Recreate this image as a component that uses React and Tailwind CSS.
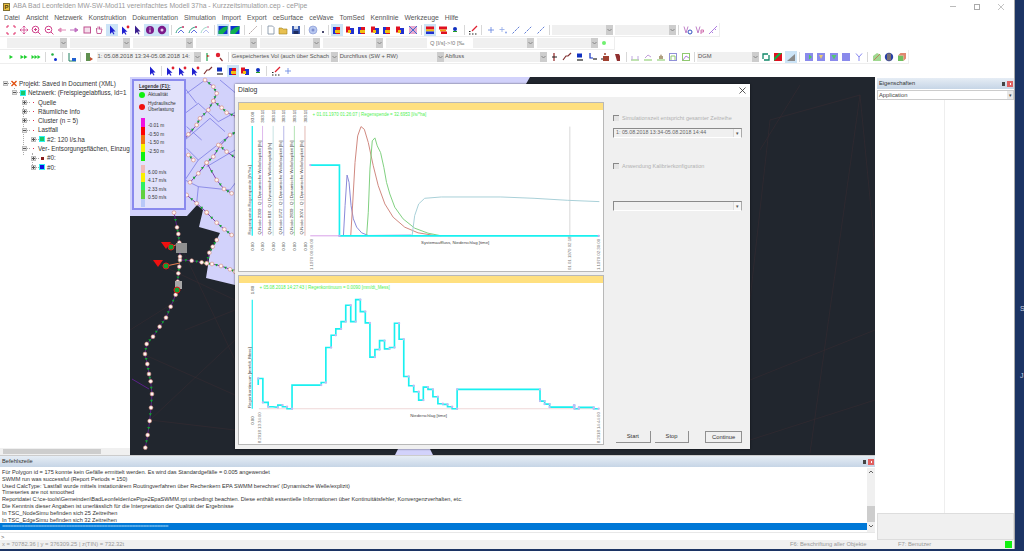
const ICONS = {
  corners: <path d="M1 3V1h2M7 1h2v2M9 7v2H7M3 9H1V7" stroke="#e0306a" fill="none" />,
  pan: <path d="M5 1v8M1 5h8M3.6 2.4 5 1l1.4 1.4M3.6 7.6 5 9l1.4-1.4M2.4 3.6 1 5l1.4 1.4M7.6 3.6 9 5 7.6 6.4" stroke="#d0408a" fill="none" strokeWidth=".8" />,
  zoomin: <g stroke="#d0408a" fill="none"><circle cx="4.5" cy="4.5" r="3.3" /><path d="M3 4.5h3M4.5 3v3M7 7l2.4 2.4" /></g>,
  zoomout: <g stroke="#d0408a" fill="none"><circle cx="4.5" cy="4.5" r="3.3" /><path d="M3 4.5h3M7 7l2.4 2.4" /></g>,
  left: <path d="M9 5H4V3L1 5l3 2V5" fill="#e08ab8" stroke="#e08ab8" />,
  right: <path d="M1 5h5V3l3 2-3 2V5" fill="#c070c0" stroke="#c070c0" />,
  square: <rect x="2" y="2" width="6.5" height="6" fill="#f4e0ec" stroke="#c05090" />,
  hand: <path d="M2.5 5V3M4 4.5v-3M5.5 4.5v-3M7 5V2.5M2.5 5 3 8.5h4L8 4" stroke="#c05090" fill="none" strokeWidth=".9" />,
  arrow: <path d="M3 .5V9l2-2 1.5 2.5 1-.6L6 6.5h2.5z" fill="#1f1fd0" />,
  arrowdark: <path d="M3 .5V9l2-2 1.5 2.5 1-.6L6 6.5h2.5z" fill="#3a1f90" />,
  arrowred: <g><path d="M2 1.5v8l2-2 1.5 2.3 1-.6L5 6.8h2.5z" fill="#1f1fd0" /><circle cx="8" cy="2" r="1.4" fill="#e02030" /></g>,
  info: <g><circle cx="5" cy="5" r="4" fill="#7a1a8a" /><path d="M5 2.5v1M5 4.5v3" stroke="#fff" /></g>,
  gear: <g><circle cx="5" cy="5" r="4.2" fill="#7a1a8a" /><circle cx="5" cy="5" r="1.5" fill="#e8c8f0" /></g>,
  swoop: <g fill="none"><path d="M1 8C2 4 5 2 9 2" stroke="#30a080" /><path d="M3 8 6 5 9 8" stroke="#6070e0" /><circle cx="8" cy="2" r="1" fill="#e0407a" /></g>,
  swoopfade: <g fill="none"><path d="M1 8C2 4 5 2 9 2" stroke="#a0d8c8" /><path d="M3 8 6 5 9 8" stroke="#b8c0f0" /><circle cx="8" cy="2" r="1" fill="#f0a0c0" /></g>,
  terrain: <g><rect x=".5" y="1" width="9" height="8" fill="#1030d0" /><path d="M.5 9V6L5 2.5 9.5 1v3L5 9z" fill="#10b050" /></g>,
  line: <path d="M1 9l8-8" stroke="#b0a0a0" strokeDasharray="2 1" />,
  page: <path d="M2 1h4.5L8 2.5V9H2z" fill="#fff" stroke="#7a8aa0" strokeWidth=".8" />,
  folder: <path d="M1 3h3l1 1h4v5H1z" fill="#e8c050" stroke="#a08020" strokeWidth=".6" />,
  save: <g><rect x="1" y="1" width="8" height="8" fill="#4060b0" /><rect x="3" y="1" width="4" height="3" fill="#d8e0f0" /><rect x="2.5" y="6" width="5" height="3" fill="#1c2c60" /></g>,
  globe: <g><circle cx="5" cy="5" r="4" fill="#b8c8f0" stroke="#8090d0" strokeWidth=".6" /><circle cx="5" cy="5" r="1.5" fill="#8090d0" /></g>,
  rb: <g><rect x="1" y="2" width="4" height="7" fill="#2030d0" /><rect x="4" y="2" width="4" height="7" fill="#e01020" /><rect x="3" y="5" width="5" height="3" fill="#f0c010" /></g>,
  rb2: <g><rect x="1" y="1.5" width="4" height="6" fill="#e01020" /><rect x="5" y="3" width="4" height="6" fill="#2030d0" /><rect x="3" y="5" width="3" height="3" fill="#f0c010" /></g>,
  mix: <g><rect x="1" y="1" width="8" height="8" fill="#e8a8d0" /><path d="M1 1l8 8M9 1 1 9" stroke="#4070d0" /></g>,
  stack: <g><rect x="1" y="1.5" width="8" height="3" fill="#e01020" /><rect x="1" y="4.5" width="8" height="2" fill="#f0c010" /><rect x="1" y="6.5" width="8" height="2.5" fill="#2030d0" /></g>,
  stack2: <g><rect x="1" y="1.5" width="8" height="3" fill="#e01020" /><rect x="2" y="4.5" width="6" height="2" fill="#f0a010" /><rect x="3" y="6.5" width="6" height="2.5" fill="#e01020" /></g>,
  node: <g><circle cx="5" cy="4" r="2" fill="#1030c0" /><path d="M3 6.5h4" stroke="#20a020" /></g>,
  tools: <g><path d="M4 6l5-5" stroke="#e02030" strokeWidth="1.2" /><path d="M1 9h1.5M4 9h1.5M7 9h1.5M1 6.5h1.5" stroke="#202020" strokeWidth="1.2" /></g>,
  plus: <path d="M5 2v6M2 5h6" stroke="#6080e0" strokeWidth=".8" />,
  plusdot: <g><path d="M4 2v5M1.5 4.5h5" stroke="#90a8e8" strokeWidth=".8" /><circle cx="8" cy="7.5" r="1" fill="#90a8e8" /></g>,
  seg: <path d="M1.5 8.5l7-7" stroke="#5070d0" strokeWidth=".9" strokeDasharray="2.5 1" />,
  vb: <g fill="none"><path d="M1 1.5 3 8l2-6.5" stroke="#c080c8" /><circle cx="7" cy="7" r="2" stroke="#3050c0" /></g>,
  vp: <g fill="none"><path d="M1 1.5 3 8l2-6.5" stroke="#c080c8" /><path d="M6 9V5h2.5v2H6" stroke="#d070b0" /></g>,
  vs: <path d="M1 9l8-8M3 6l2 2M6 3l2 2" stroke="#b080e0" fill="none" />,
  play: <path d="M3.5 3v4L7 5z" fill="#20d030" />,
  play2: <path d="M1.5 3v4L5 5zM5 3v4l3.5-2z" fill="#20d030" />,
  play3: <path d="M.5 3v4L3.5 5zM3.5 3v4L6.5 5zM6.5 3v4L9.5 5z" fill="#20d030" />,
  netdot: <g><circle cx="3.5" cy="2.5" r="1.3" fill="#20b040" /><circle cx="6.5" cy="7.5" r="1.5" fill="#1030d0" /></g>,
  kn: <g><path d="M2 1v8h7" stroke="#208060" fill="none" /><rect x="5" y="6" width="4" height="3" fill="#2060d0" /></g>,
  plant: <g><rect x="2" y="1" width="4" height="8" fill="#609050" /><path d="M6 5l3 2-3 2z" fill="#c05030" /></g>,
  tee: <g><path d="M5 1v8" stroke="#20a050" strokeWidth="1.2" /><path d="M5 3l3 1-3 1" fill="#c03020" /></g>,
  tee2: <g><circle cx="4" cy="3" r="2.2" fill="#e02030" /><path d="M6 6l2.5 3" stroke="#903030" strokeWidth="1.2" /></g>,
  pipeA: <g><path d="M4 1v8" stroke="#902020" strokeWidth="1.2" /><path d="M2 5h5" stroke="#202020" /></g>,
  pipeB: <path d="M1 8l3-4h2l3-3" stroke="#803030" fill="none" strokeWidth="1.2" />,
  pipeC: <g><rect x="2" y="1.5" width="5" height="4" fill="#1030c0" /><path d="M2 8h6" stroke="#202020" strokeWidth="1.2" /></g>,
  pipeD: <g><path d="M2 1v5h3" stroke="#1030c0" strokeWidth="1.2" fill="none" /><path d="M5 7h4" stroke="#202020" strokeWidth="1.2" /></g>,
  pipeE: <g><rect x="3" y="4" width="6" height="5" fill="#a04030" /><path d="M1 7h2" stroke="#202020" /><circle cx="5" cy="2" r="1" fill="#a04030" /></g>,
  pipeF: <path d="M2 2h4l1 2v5H4z" fill="#903030" />,
  chart: <g fill="none"><path d="M1 8h8" stroke="#80c860" /><path d="M2 8V4M8 8V4" stroke="#c0a8e0" /></g>,
  chart2: <g fill="none"><path d="M1 8h8" stroke="#80c860" /><path d="M2 6l3-3 3 2" stroke="#c0a0d8" /></g>,
  chart3: <g><path d="M1 8h8" stroke="#80c860" /><path d="M3 7V4h4v3zM4 4l1-2 1 2" fill="#b0a080" /></g>,
  chart4: <g fill="none"><rect x="1.5" y="1.5" width="7" height="7" stroke="#9090d8" /><path d="M3 8V4h4v4" stroke="#90c870" /></g>,
  chart5: <g fill="none"><rect x="1.5" y="1.5" width="7" height="7" stroke="#90c870" /><path d="M2 8l3-4 3 2" stroke="#b080d8" /></g>,
  cycle: <g fill="none" stroke="#108868" strokeWidth="1.3"><path d="M2 7V2h5" /><path d="M8 3v5H3" /></g>,
  rg: <g><rect x="1" y="1" width="8" height="8" fill="#e01020" /><path d="M1 9V6L6 1h3z" fill="#10b040" /></g>,
  wedge: <path d="M1 9 9 2v7z" fill="#8a8a8a" />,
  blueA: <g><rect x="1" y="1" width="8" height="8" fill="#8a8aec" /><path d="M5 2.5 8 5 5 7.5z" fill="#50c860" /></g>,
  blueB: <g><rect x="1" y="1" width="8" height="8" fill="#8a8aec" /><path d="M3 3h4L5 7z" fill="#e8c870" /></g>,
  blueC: <g><rect x="1" y="1" width="8" height="8" fill="#8a8aec" /><path d="M2.5 3h5L5 7.5z" fill="#50c870" /></g>,
  blueD: <rect x="1" y="1" width="8" height="8" fill="#8a8aec" />,
  why: <path d="M2 1.5 5 5l3-3.5M5 5v4" stroke="#8888f0" fill="none" />,
  greenmap: <g><path d="M1 9V4l4-3 4 2v6z" fill="#a0d890" /><path d="M2 8l6-6" stroke="#c08060" /></g>,
  earth: <g><circle cx="5" cy="5" r="4.2" fill="#2840a8" /><path d="M4 1.5v7M6 1.5v7" stroke="#c8a040" /></g>,
  cube: <g><rect x="1" y="3.5" width="5.5" height="5.5" fill="#70c060" /><path d="M1 3.5 3.5 1H9v5.5L6.5 9V3.5z" fill="#e08870" /></g>,
}

function Ic({ k, on }) {
  return (
    <span className={`w-[12.6px] h-[12px] flex shrink-0 items-center justify-center ${on ? 'bg-[#cce4f7]' : ''}`}>
      <svg className="w-[10px] h-[10px]" viewBox="0 0 10 10">{ICONS[k]}</svg>
    </span>
  )
}

function Sep() {
  return <span className="w-px h-[10px] mx-[2px] shrink-0 bg-[#d8d8d8]" />
}

function Combo({ w, text }) {
  return (
    <div className={`${w} h-[10px] shrink-0 flex items-center justify-between bg-[#f0f0f0] text-[5.8px] text-[#555] overflow-hidden`}>
      <span className="pl-[1px] whitespace-nowrap">{text}</span>
      <span className="w-[7px] h-full shrink-0 flex items-center justify-center bg-[#cdcdcd]">
        <svg className="w-[5px] h-[4px]" viewBox="0 0 5 4"><path d="M.5 1 2.5 3 4.5 1" stroke="#888" fill="none" /></svg>
      </span>
    </div>
  )
}

const MENU = ['Datei', 'Ansicht', 'Netzwerk', 'Konstruktion', 'Dokumentation', 'Simulation', 'Import', 'Export', 'ceSurface', 'ceWave', 'TomSed', 'Kennlinie', 'Werkzeuge', 'Hilfe']

function Toolbars() {
  return (
    <div className="h-[54px] shrink-0 flex flex-col bg-white">
      <div className="h-[14px] flex items-center pl-[5px] border-b border-r border-[#eee] w-[720px]">
        {['corners', 'pan', 'zoomin', 'zoomout', 'left', 'right', 'square', 'hand'].map((k, i) => <Ic key={i} k={k} />)}
        <Ic k="arrow" on /><Ic k="arrowred" /><Ic k="arrowdark" /><Ic k="info" on /><Ic k="gear" on />
        <Sep />
        <Ic k="swoop" /><Ic k="swoop" /><Ic k="swoopfade" />
        <Sep />
        <Ic k="terrain" on /><Ic k="terrain" />
        <Sep />
        <Ic k="line" />
        <Sep />
        <Ic k="page" /><Ic k="folder" /><Ic k="save" />
        <Sep />
        <Ic k="globe" /><span className="w-[8px] h-[10px] flex items-end justify-center"><span className="w-[2px] h-[2px] mb-[2px] rounded-full bg-[#101040]" /></span>
        <Sep />
        <Ic k="rb" on /><Ic k="rb2" /><Ic k="rb" /><Ic k="rb2" /><Ic k="rb" /><Ic k="rb2" /><Ic k="mix" />
        <Sep />
        <Ic k="stack" on /><Ic k="stack2" /><Ic k="node" />
        <Sep />
        <Ic k="tools" />
        <Sep />
        <Ic k="plus" /><Ic k="plusdot" /><Ic k="seg" /><Ic k="seg" /><Ic k="seg" />
        <Sep />
        <div className="flex gap-[2px]"><Combo w="w-[61px]" /><Combo w="w-[61px]" /></div>
        <Sep />
        <Ic k="vb" /><Ic k="vp" /><Ic k="vs" />
      </div>
      <div className="h-[13px] flex items-center pl-[7px] gap-[3px] w-[615px] border-b border-r border-[#eee]">
        <Combo w="w-[60px]" /><Combo w="w-[60px]" /><Combo w="w-[60px]" /><Combo w="w-[61px]" /><Combo w="w-[60px]" /><Combo w="w-[60px]" />
        <div className="w-[41px] h-[10px] bg-[#f0f0f0]" />
        <span className="w-[40px] text-[5.8px] text-[#777] whitespace-nowrap">Q [l/s]-&gt;!0 [‰</span>
        <Combo w="w-[61px]" />
        <Combo w="w-[61px]" />
        <span className="w-[4px] h-[4px] ml-[1px] rounded-full bg-[#70f070]" />
      </div>
      <div className="h-[14px] flex items-center pl-[5px] w-[909px] border-b border-r border-[#eee]">
        <Ic k="play" /><Ic k="play2" /><Ic k="play3" />
        <Sep />
        <Ic k="netdot" />
        <Sep />
        <Ic k="kn" />
        <Sep />
        <Ic k="plant" />
        <div className="w-[104px] ml-[1px]"><Combo w="w-[104px]" text="1: 05.08.2018 13:34-05.08.2018 14:" /></div>
        <Ic k="tee" /><Ic k="tee2" />
        <Sep />
        <Combo w="w-[107px]" text="Gespeichertes Vol (auch über Schach" />
        <div className="w-[2px]" />
        <Combo w="w-[105px]" text="Durchfluss (SW + RW)" />
        <div className="w-[1px]" />
        <Combo w="w-[103px]" text="Abfluss" />
        <div className="w-[3px]" />
        <Ic k="pipeA" /><Ic k="pipeB" /><Ic k="pipeC" /><Ic k="pipeD" /><Ic k="pipeE" /><Ic k="pipeF" />
        <Sep />
        <Ic k="chart" /><Ic k="chart2" /><Ic k="chart3" /><Ic k="chart4" /><Ic k="chart5" />
        <Sep />
        <Combo w="w-[62px]" text="DGM" />
        <div className="w-[1px]" />
        <Ic k="cycle" /><Ic k="rg" /><Ic k="wedge" on />
        <Sep />
        <Ic k="blueA" /><Ic k="blueB" /><Ic k="blueC" /><Ic k="blueD" /><Ic k="why" />
        <Sep />
        <Ic k="greenmap" /><Ic k="earth" /><Ic k="cube" />
      </div>
      <div className="h-[13px] flex items-center pl-[146px]">
        <Ic k="arrow" />
        <Sep />
        <Ic k="arrowred" /><Ic k="arrowred" /><Ic k="arrowred" /><Ic k="pipeB" /><Ic k="pipeC" /><Ic k="rb" on /><Ic k="rb2" /><Ic k="node" />
        <Sep />
        <Ic k="tools" /><Ic k="plus" />
      </div>
    </div>
  )
}

const TREE = [
  { x: 19, exp: '-', box: 'x', text: 'Projekt: Saved in Document (XML)' },
  { x: 28, exp: '-', box: 'cyan', text: 'Netzwerk:  (Freispiegelabfluss, Id=1' },
  { x: 38, exp: '+', box: 'tick', text: 'Quelle' },
  { x: 38, exp: '+', box: 'tick', text: 'Räumliche Info' },
  { x: 38, exp: '+', box: 'tick', text: 'Cluster (n = 5)' },
  { x: 38, exp: '-', box: 'tick', text: 'Lastfall' },
  { x: 47, exp: '+', box: 'cyan', text: '#2: 120 l/s.ha' },
  { x: 38, exp: '-', box: 'tick', text: 'Ver- Entsorgungsflächen, Einzug' },
  { x: 47, exp: '+', box: 'brown', text: '#0:' },
  { x: 47, exp: '+', box: 'blue', text: '#0:' },
]

function TreeBox({ kind }) {
  if (kind === 'x') {
    return (
      <svg className="w-[6px] h-[7px] shrink-0" viewBox="0 0 6 7"><path d="M.5 1l5 5M5.5 1l-5 5" stroke="#e05010" strokeWidth="1.4" /></svg>
    )
  }
  if (kind === 'cyan') return <span className="w-[6px] h-[6px] shrink-0 bg-[#18c868] border border-[#30f0f0]" />
  if (kind === 'brown') return <span className="w-[6px] h-[6px] shrink-0 flex items-center justify-center"><span className="w-[3px] h-[3px] bg-[#8a1c1c]" /></span>
  if (kind === 'blue') return <span className="w-[6px] h-[6px] shrink-0 bg-[#1010e0] border border-[#30f0f0]" />
  return <span className="w-[6px] h-[6px] shrink-0 flex items-center justify-center"><span className="w-px h-px bg-[#e03050]" /></span>
}

function TreePanel() {
  return (
    <div className="w-[130px] shrink-0 relative flex flex-col bg-white overflow-hidden">
      <span className="absolute left-[14px] top-[11px] h-[5px] border-l border-dotted border-[#aaa]" />
      <span className="absolute left-[23px] top-[20px] h-[58px] border-l border-dotted border-[#aaa]" />
      <span className="absolute left-[32px] top-[76px] h-[14px] border-l border-dotted border-[#aaa]" />
      <div className="flex-1 pt-[2px] flex flex-col text-[6.3px] text-[#333]">
        {TREE.map((row) => (
          <div key={row.text} style={{ paddingLeft: row.x - 17 }} className="h-[9.3px] flex items-center whitespace-nowrap">
            <span className="w-[6px] h-[5px] shrink-0 flex items-center justify-center relative">
              <span className="w-[5px] h-[5px] bg-[#e8e8e8] border border-[#bbb]" />
              <span className={`absolute w-[3px] h-px bg-[#555] ${row.exp === '+' ? 'after:absolute after:left-[1px] after:-top-[1px] after:w-px after:h-[3px] after:bg-[#555]' : ''}`} />
            </span>
            <span className="w-[3px] shrink-0 border-t border-dotted border-[#aaa]" />
            <TreeBox kind={row.box} />
            <span className="ml-[2px]">{row.text}</span>
          </div>
        ))}
      </div>
      <div className="h-[7px] flex items-center bg-[#f0f0f0]">
        <span className="ml-[3px] w-[98px] h-[5px] bg-[#cdcdcd]" />
      </div>
    </div>
  )
}

// page coordinates = zoom coordinates / 3 + crop origin
const from = (ox, oy, list) => list.map(([x, y]) => [ox + x / 3, oy + y / 3])
const CHAINS = [
  from(130, 210, [[132, 8], [141, 52], [145, 72], [148, 98], [150, 140], [148, 170], [145, 190], [143, 215], [140, 240], [137, 254], [122, 290], [108, 323], [89, 350], [69, 380], [50, 402], [45, 432], [52, 462], [57, 492], [62, 514], [66, 552], [63, 593], [59, 633], [53, 675], [46, 713]]),
  from(130, 210, [[150, 150], [185, 152], [215, 157], [230, 160], [246, 162], [273, 168], [300, 178], [315, 185]]),
  from(130, 210, [[230, 160], [238, 128], [248, 110], [260, 90]]),
  from(130, 210, [[230, 8], [260, 38], [283, 58], [305, 75]]),
  from(0, 75, [[615, 15], [640, 35], [650, 55], [640, 78], [625, 105], [600, 130], [590, 150], [565, 178], [545, 205]]),
  from(0, 75, [[640, 78], [665, 98], [680, 113], [710, 125]]),
  from(0, 75, [[712, 170], [690, 180], [660, 212], [640, 245], [620, 263], [595, 295], [570, 322]]),
  from(0, 75, [[655, 210], [680, 230], [715, 255]]),
  from(0, 75, [[565, 240], [580, 255]]),
  from(0, 75, [[620, 263], [650, 315], [672, 342], [695, 355]]),
  from(0, 75, [[560, 360], [590, 385], [620, 412]]),
]
const PARCELS = [
  [[170, 40], [225, 0]], [[165, 100], [205, 70], [265, 125]], [[165, 180], [240, 115]], [[170, 205], [205, 240], [165, 300]],
  [[205, 240], [300, 165]], [[200, 70], [165, 25]], [[265, 125], [320, 95]], [[165, 300], [205, 320], [200, 370]], [[205, 320], [300, 330]],
  [[270, 0], [330, 50]], [[300, 330], [330, 290]], [[230, 260], [315, 210]], [[170, 140], [215, 180]], [[240, 115], [285, 155]],
].map((l) => from(130, 80, l))
const TIN = [
  [[860, 95], [770, 120], [750, 300]], [[860, 95], [875, 250]], [[860, 95], [810, 453]], [[750, 380], [875, 330]], [[750, 440], [875, 400]], [[800, 85], [760, 150]],
  [[150, 420], [235, 340]], [[150, 260], [235, 300]], [[150, 420], [235, 430]], [[130, 330], [178, 300]], [[145, 355], [235, 395]], [[178, 240], [235, 360]], [[185, 330], [235, 310]],
]

const pts = (list) => list.map((p) => p.join(',')).join(' ')

function MapView() {
  return (
    <svg className="w-full h-full block" viewBox="130 77 745 378" preserveAspectRatio="none">
      <rect x="130" y="77" width="745" height="378" fill="#21262e" />
      {TIN.map((l, i) => <polyline key={i} points={pts(l)} fill="none" stroke="#3b2d33" strokeWidth=".5" />)}
      <polygon points="130,77 530,77 526,84 240,84 240,290 235,285 206,278 210,253 220,233 199,227 203,210 197,205 187,216 130,216" fill="#d2d2fb" />
      <polygon points="395,455 433,455 430,449 398,449" fill="#d2d2fb" />
      {PARCELS.map((l, i) => <polyline key={i} points={pts(l)} fill="none" stroke="#7070e0" strokeWidth=".7" />)}
      <polyline points="132,379 149,389" fill="none" stroke="#6a1fa0" strokeWidth=".8" />
      {CHAINS.map((c, i) => <polyline key={i} points={pts(c)} fill="none" stroke="#6a1fa0" strokeWidth=".8" />)}
      {CHAINS.flatMap((c, i) => c.slice(1).map(([x, y], j) => {
        const [px, py] = c[j]
        const mx = (x + px) / 2
        const my = (y + py) / 2
        return <polygon key={`a${i}-${j}`} points={`${mx - 1.4},${my - 1} ${mx + 1.4},${my - 1} ${mx},${my + 1.6}`} fill="#10a830" />
      }))}
      {CHAINS.flatMap((c, i) => c.map(([x, y], j) => (
        <circle key={`n${i}-${j}`} cx={x} cy={y} r="1.9" fill="#fff4f2" stroke="#d08878" strokeWidth=".6" />
      )))}
      <polyline points="171,247 180,243" fill="none" stroke="#e88050" strokeWidth="1" />
      <polyline points="166,266 180,263" fill="none" stroke="#e88050" strokeWidth="1" />
      <polygon points="161,242 171,242 166,249" fill="#f01010" />
      <polygon points="153,260 163,260 158,267" fill="#f01010" />
      <rect x="176" y="243" width="11" height="10" fill="#909090" />
      <rect x="175" y="281" width="7" height="8" fill="#a8a8a8" />
      {[[171, 247], [166, 266], [177, 290]].map(([x, y]) => <circle key={x} cx={x} cy={y} r="3" fill="#10a030" stroke="#e01818" strokeWidth="1" />)}
    </svg>
  )
}

const BAR1 = [['bg-[#f010e0]', '-0.01 m'], ['bg-[#ff0000]', '-0.50 m'], ['bg-[#f07010]', '-1.50 m'], ['bg-[#f8f000]', '-2.50 m'], ['bg-[#10f010]', '']]
const BAR2 = [['bg-[#f0b8b8]', '6.00 m/s'], ['bg-[#f8f000]', '4.17 m/s'], ['bg-[#30f060]', '2.33 m/s'], ['bg-[#60d040]', '0.50 m/s'], ['bg-[#b8c8f8]', '']]

function Legend() {
  return (
    <div className="absolute left-[2px] top-[2px] w-[54px] h-[131px] flex flex-col bg-[#e2e2fb] border-2 border-[#8a8aee] pl-[5px] text-[4.8px] leading-[6px] text-[#333]">
      <div className="mt-[3px] font-bold underline whitespace-nowrap">Legende (F1):</div>
      <div className="mt-[2px] flex items-center gap-[3px]"><span className="w-[6px] h-[6px] rounded-full bg-[#10f010]" />Aktualität</div>
      <div className="mt-[3px] flex items-center gap-[3px]"><span className="w-[6px] h-[6px] shrink-0 rounded-full bg-[#f01010]" /><span>Hydraulische Überlastung</span></div>
      <div className="mt-[5px] flex flex-col pl-[2px]">
        {BAR1.map(([c, t]) => <div key={c} className="h-[8.5px] flex items-center"><span className={`w-[4px] h-full ${c}`} /><span className="ml-[3px] translate-y-[4px]">{t}</span></div>)}
      </div>
      <div className="mt-[4px] flex flex-col pl-[2px]">
        {BAR2.map(([c, t]) => <div key={c} className="h-[8.5px] flex items-center"><span className={`w-[4px] h-full ${c}`} /><span className="ml-[3px] translate-y-[4px]">{t}</span></div>)}
      </div>
    </div>
  )
}

const AXES = [
  [50, '#19f0f0', '93.00', 'Regenspende Regenspende [l/s*ha]', 2.5],
  [81, '#c888e0', '303.19', 'Q-Node 2309 : Q | Dynamische Welle/explizit [l/s]', 1.2],
  [113, '#a0d0d0', '303.19', 'Q-Node 818 : Q | Dynamische Welle/explizit [l/s]', 1.2],
  [145, '#8888d8', '303.19', 'Q-Node 1572 : Q | Dynamische Welle/explizit [l/s]', 1.2],
  [177, '#80d080', '303.19', 'Q-Node 2839 : Q | Dynamische Welle/explizit [l/s]', 1.2],
  [209, '#d08880', '303.19', 'Q-Node 3074 : Q | Dynamische Welle/explizit [l/s]', 1.2],
]

function Rot({ x, y, size = 13, fill = '#444', children }) {
  return <text x={x} y={y} fontSize={size} fill={fill} transform={`rotate(-90 ${x} ${y})`}>{children}</text>
}

function Chart1() {
  return (
    <svg className="flex-1 w-full min-h-0 block" viewBox="10 42 1098 485" preserveAspectRatio="none">
      <text x="232" y="61" fontSize="13.5" fill="#50f050">+ 01.01.1970 01:26:07 | Regenspende = 32.6953 [l/s/*ha]</text>
      {AXES.map(([x, c, top, label, w]) => (
        <g key={x}>
          <line x1={x} x2={x} y1="90" y2="421" stroke={c} strokeWidth={w * 1.5} />
          <Rot x={x + 5} y="80">{top}</Rot>
          <Rot x={x + 5} y="466">0.00</Rot>
          <Rot x={x - 5} y="417">{label}</Rot>
        </g>
      ))}
      <line x1="1008" x2="1008" y1="92" y2="421" stroke="#d8d8d8" strokeWidth="3" />
      <line x1="225" x2="313" y1="421" y2="421" stroke="#d8a0e8" strokeWidth="3" />
      <polyline fill="none" stroke="#8888d8" strokeWidth="3" points="325,421 330,330 336,238 342,260 348,330 355,370 365,395 380,412 400,420 530,419" />
      <polyline fill="none" stroke="#d08880" strokeWidth="3" points="347,421 352,340 360,200 368,120 378,92 388,100 400,140 415,210 430,270 450,325 475,365 510,395 550,412 600,420" />
      <polyline fill="none" stroke="#80d080" strokeWidth="3" points="395,421 400,350 405,220 412,135 420,126 427,150 437,170 447,215 455,260 465,295 480,335 505,370 540,398 580,413 620,421" />
      <polyline fill="none" stroke="#a8d0d8" strokeWidth="3" points="532,421 540,360 552,325 570,308 620,304 800,304 900,308 1000,314 1097,318" />
      <polyline fill="none" stroke="#19f0f0" strokeWidth="5" points="225,208 313,208 313,421 1097,421" />
      <circle cx="225" cy="208" r="3.5" fill="#c8a8f0" /><circle cx="313" cy="421" r="3.5" fill="#c8a8f0" /><circle cx="1095" cy="421" r="3.5" fill="#c8a8f0" />
      <text x="662" y="446" fontSize="13" fill="#444" textAnchor="middle">Systemauffluss, Niederschlag [time]</text>
      <Rot x="232" y="524" fill="#777">1.1970 00:00:00</Rot>
      <Rot x="1012" y="524" fill="#777">01.01.1970 02:18</Rot>
      <Rot x="1099" y="524" fill="#777">1.1970 02:30:00</Rot>
    </svg>
  )
}

const RAIN = [[68, 345], [68, 325], [82, 325], [82, 397], [98, 397], [98, 410], [112, 410], [127, 412], [127, 405], [141, 405], [141, 410], [155, 410], [155, 416], [170, 416], [170, 345], [258, 345], [258, 337], [272, 337], [272, 232], [288, 232], [288, 195], [302, 195], [302, 176], [318, 176], [318, 154], [332, 154], [332, 105], [347, 105], [347, 154], [362, 154], [362, 88], [376, 88], [376, 124], [391, 124], [391, 158], [405, 158], [405, 261], [420, 261], [420, 238], [434, 238], [434, 211], [449, 211], [449, 236], [464, 236], [464, 232], [479, 232], [479, 159], [493, 159], [493, 207], [507, 207], [507, 319], [522, 319], [522, 347], [537, 347], [537, 365], [552, 365], [552, 390], [566, 390], [566, 351], [580, 351], [580, 358], [595, 358], [595, 380], [610, 380], [610, 401], [625, 401], [625, 403], [639, 403], [639, 410], [653, 410], [653, 416], [668, 416], [668, 358], [918, 358], [918, 393], [932, 393], [932, 402], [947, 402], [947, 411], [1020, 411], [1020, 406], [1022, 406], [1022, 416], [1035, 416], [1035, 412], [1080, 412], [1080, 416], [1095, 416]]

function Chart2() {
  return (
    <svg className="flex-1 w-full min-h-0 block" viewBox="10 38 1098 484" preserveAspectRatio="none">
      <text x="72" y="56" fontSize="13.5" fill="#50f050">+ 05.08.2018 14:27:43 | Regenkontinuum = 0.0090 [mm/dt_Mess]</text>
      <line x1="50" x2="50" y1="88" y2="416" stroke="#19f0f0" strokeWidth="3.5" />
      <Rot x="55" y="72">1.80</Rot>
      <Rot x="55" y="464">0.00</Rot>
      <Rot x="45" y="414">Regenkontinuum  [mm/dt_Mess]</Rot>
      <line x1="70" x2="1097" y1="416" y2="416" stroke="#f0d8d8" strokeWidth="3" />
      <polyline fill="none" stroke="#19f0f0" strokeWidth="5" points={pts(RAIN)} />
      {RAIN.filter((_, i) => i % 2 === 1 || i > 70).map(([x, y], i) => <circle key={i} cx={x} cy={y} r="3.5" fill="#c8b8f4" />)}
      <text x="582" y="442" fontSize="13" fill="#444" textAnchor="middle">Niederschlag [time]</text>
      <Rot x="75" y="520" fill="#777">8.2018 13:34:00</Rot>
      <Rot x="1100" y="520" fill="#777">8.2018 14:44:00</Rot>
    </svg>
  )
}

function Check({ label }) {
  return (
    <div className="h-[8px] flex items-center gap-[3px] text-[5.5px] text-[#b0b0b0] whitespace-nowrap">
      <span className="w-[6px] h-[6px] bg-[#e4e4e4] border-t border-l border-[#888]" />
      {label}
    </div>
  )
}

function DlgSelect({ text }) {
  return (
    <div className="h-[10px] w-[129px] flex items-center justify-between border border-[#8a8a8a] border-b-white border-r-[#aaa] bg-[#f0f0f0] text-[5.3px] text-[#666]">
      <span className="pl-[2px] whitespace-nowrap">{text}</span>
      <span className="w-[8px] h-full flex items-center justify-center bg-[#f6f6f6] text-[5px] leading-none text-[#555] border-l border-[#ddd]">▾</span>
    </div>
  )
}

function DlgButton({ w, bold, children }) {
  return (
    <button className={`${w} h-[12px] flex items-center justify-center bg-[#f0f0f0] text-[5.8px] text-[#333] border-r border-b border-[#909090] ${bold ? 'border-t border-l border-[#707070]' : ''}`}>
      {children}
    </button>
  )
}

function ChartCard({ chart }) {
  return (
    <div className="h-[170px] shrink-0 flex flex-col border border-[#b8b8b8] bg-white">
      <div className="h-[7px] shrink-0 bg-[#ffe080]" />
      {chart}
    </div>
  )
}

function Dialog() {
  return (
    <div className="absolute left-[105px] top-[7px] w-[515px] h-[365px] flex flex-col bg-[#f0f0f0] shadow-[0_0_2px_rgba(0,0,0,0.6)]">
      <div className="h-[13px] shrink-0 flex items-center justify-between px-[3px] bg-white text-[6.8px] text-[#333]">
        <span>Dialog</span>
        <svg className="w-[7px] h-[7px] mr-[1px]" viewBox="0 0 7 7"><path d="M.5.5l6 6M6.5.5l-6 6" stroke="#333" strokeWidth=".8" /></svg>
      </div>
      <div className="flex-1 flex min-h-0">
        <div className="w-[366px] shrink-0 ml-[3px] mt-[5px] flex flex-col gap-[3px]">
          <ChartCard chart={<Chart1 />} />
          <ChartCard chart={<Chart2 />} />
        </div>
        <div className="flex-1 min-w-0 flex flex-col pl-[9px] pr-[8px] pt-[17px] pb-[6px]">
          <Check label="Simulationszeit entspricht gesamter Zeitreihe" />
          <div className="mt-[6px]"><DlgSelect text="1: 05.08.2018 13:34-05.08.2018 14:44" /></div>
          <div className="mt-[24px]"><Check label="Anwendung Kalibrierkonfiguration" /></div>
          <div className="mt-[31px]"><DlgSelect /></div>
          <div className="mt-auto pl-[3px] flex gap-[4px]">
            <DlgButton w="w-[36px]">Start</DlgButton>
            <DlgButton w="w-[36px]">Stop</DlgButton>
            <DlgButton w="w-[38px] ml-[12px]" bold>Continue</DlgButton>
          </div>
        </div>
      </div>
    </div>
  )
}

const LOG = [
  'Für Polygon id = 175 konnte kein Gefälle ermittelt werden. Es wird das Standardgefälle = 0.005 angewendet',
  'SWMM run was successful (Report Periods = 150)',
  "Used CalcType: 'Lastfall wurde mittels instationärem Routingverfahren über Rechenkern EPA SWMM berechnet' (Dynamische Welle/explizit)",
  'Timeseries are not smoothed',
  'Reportdatei C:\\ce-tools\\Gemeinden\\BadLeonfelden\\cePipe2EpaSWMM.rpt unbedingt beachten. Diese enthält essentielle Informationen über Kontinuitätsfehler, Konvergenzverhalten, etc.',
  'Die Kenntnis dieser Angaben ist unerlässlich für die Interpretation der Qualität der Ergebnisse',
  'In TSC_NodeSimu befinden sich 25 Zeitreihen',
  'In TSC_EdgeSimu befinden sich 32 Zeitreihen',
]

function PaneHeader({ title }) {
  return (
    <div className="h-[11px] shrink-0 flex items-center justify-between pl-[2px] pr-[1px] bg-gradient-to-b from-[#e6edf5] to-[#c6d5e6] text-[5.7px] text-[#333]">
      <span>{title}</span>
      <span className="flex items-center gap-[2px]">
        <span className="w-[3px] h-[4px] bg-[#444]" />
        <span className="w-[6px] h-[6px] bg-[#e06060] flex items-center justify-center"><span className="w-px h-[2px] bg-white" /></span>
      </span>
    </div>
  )
}

function CommandPane() {
  return (
    <div className="h-[85px] shrink-0 flex flex-col bg-white border-t border-[#ccc]">
      <PaneHeader title="Befehlszeile" />
      <div className="flex-1 flex min-h-0 pt-[1px]">
        <div className="flex-1 min-w-0 text-[5.6px] leading-[6.8px] text-[#333] pl-[2px] pt-[1px]">
          {LOG.map((line) => <div key={line} className="whitespace-nowrap">{line}</div>)}
          <div className="-ml-[2px] h-[7px] flex items-center bg-[#0078d7] text-[#9fd0f5] pl-[2px] whitespace-nowrap tracking-[-0.5px]">
            {'='.repeat(60)}
          </div>
        </div>
        <div className="w-[8px] shrink-0 flex flex-col items-center bg-[#f0f0f0]">
          <svg className="w-[6px] h-[6px] mt-[1px]" viewBox="0 0 6 6"><path d="M1 4l2-2 2 2" stroke="#666" fill="none" /></svg>
          <span className="mt-auto w-full h-[16px] bg-[#cdcdcd]" />
          <svg className="w-[6px] h-[6px] mb-[3px] mt-[1px]" viewBox="0 0 6 6"><path d="M1 2l2 2 2-2" stroke="#666" fill="none" /></svg>
        </div>
      </div>
      <div className="h-[8px] shrink-0 text-[5.8px] leading-[8px] text-[#555] pl-[1px] border-t border-[#e8e8e8]">&gt;</div>
    </div>
  )
}

function PropsPane() {
  return (
    <div className="w-[137px] shrink-0 ml-[2px] flex flex-col bg-white">
      <div className="h-px" />
      <PaneHeader title="Eigenschaften" />
      <div className="h-[10px] mt-[1px] flex items-center justify-between border border-[#ccc] text-[5.8px] text-[#444] pl-[1px]">
        Application
        <span className="w-[6px] h-full flex items-center justify-center bg-[#e8e8e8] text-[5px] leading-none">▾</span>
      </div>
      <div className="flex-1 flex">
        <div className="w-[68px] border-r border-[#eee]" />
      </div>
      <div className="h-[27px] bg-[#f0f0f0] border border-[#ddd]" />
    </div>
  )
}

export default function App() {
  return (
    <div className="relative w-[1024px] h-[551px] bg-[#1c3464] overflow-hidden" style={{ fontFamily: '"Liberation Sans", Arial, sans-serif' }}>
      <span className="absolute left-[1020px] top-[305px] text-[7px] leading-[8px] text-[#c8d0e0]">S</span>
      <span className="absolute left-[1020px] top-[372px] text-[7px] leading-[8px] text-[#c8d0e0]">J</span>
      <div className="w-[1015px] h-[549px] flex flex-col bg-white border-r border-[#aaa]">
        <div className="h-[13px] shrink-0 flex items-center pl-[3px] text-[6.8px] text-[#999]">
          <span className="w-[7px] h-[8px] mr-[3px] flex items-center justify-center bg-[#e8c040] border border-[#807030] text-[6px] leading-none font-bold text-[#504010]">P</span>
          <span className="whitespace-nowrap">ABA Bad Leonfelden MW-SW-Mod11 vereinfachtes Modell 37ha - Kurzzeitsimulation.cep - cePipe</span>
          <div className="ml-auto flex items-center gap-[18px] pr-[10px]">
            <span className="w-[6px] h-px bg-[#bbb]" />
            <span className="w-[6px] h-[6px] border border-[#aaa]" />
            <svg className="w-[6px] h-[6px]" viewBox="0 0 6 6"><path d="M0 0l6 6M6 0 0 6" stroke="#aaa" strokeWidth=".7" /></svg>
          </div>
        </div>
        <div className="h-[10px] shrink-0 flex items-center pl-[4px] gap-[6px] text-[6.8px] text-[#555] whitespace-nowrap">
          {MENU.map((m) => <span key={m}>{m}</span>)}
        </div>
        <Toolbars />
        <div className="flex-1 flex min-h-0">
          <div className="w-[875px] shrink-0 flex flex-col">
            <div className="flex-1 flex min-h-0">
              <TreePanel />
              <div className="flex-1 relative min-w-0">
                <MapView />
                <Legend />
                <Dialog />
              </div>
            </div>
            <CommandPane />
          </div>
          <PropsPane />
        </div>
        <div className="h-[9px] shrink-0 flex items-center bg-[#f0f0f0] text-[5.8px] text-[#999] whitespace-nowrap">
          <span className="pl-[2px]">x = 70782.36 | y = 376309.25 | z(TIN) = 732.32t</span>
          <span className="ml-auto w-[108px]">F6: Beschriftung aller Objekte</span>
          <span className="w-[107px]">F7: Benutzer</span>
          <span className="w-[7px] h-[7px] mr-[2px] bg-[#10f010]" />
        </div>
      </div>
    </div>
  )
}
